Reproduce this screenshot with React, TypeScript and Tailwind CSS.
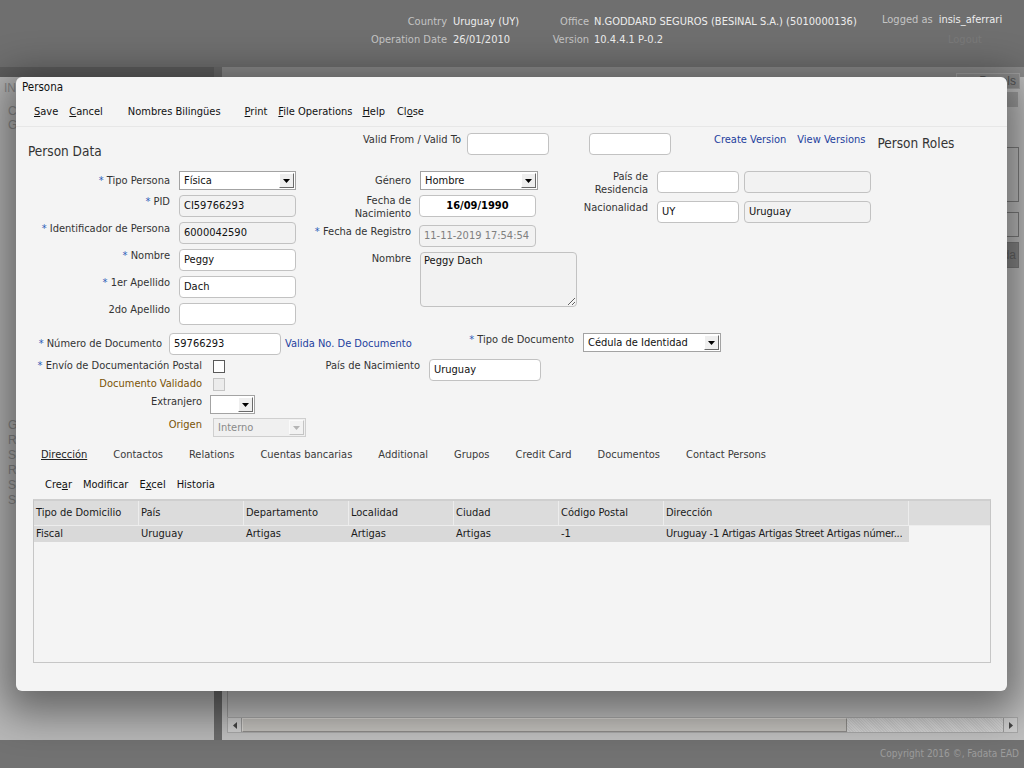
import React from "react";

const Tri = ({ color = "#000" }: { color?: string }) => (
  <svg width="7" height="4" viewBox="0 0 7 4">
    <path d="M0 0h7L3.5 4z" fill={color} />
  </svg>
);

const Req = () => <span className="text-[#2e5cb8]">*</span>;

function Select({
  value = "",
  className = "",
  disabled = false,
}: {
  value?: string;
  className?: string;
  disabled?: boolean;
}) {
  return (
    <div
      className={`flex items-center justify-between shrink-0 h-[19px] pl-[4px] pr-[1px] border ${
        disabled ? "bg-[#f0f0f0] border-[#cfcfcf] text-[#8a8a8a]" : "bg-white border-[#a3a3a3] text-[#111]"
      } ${className}`}
    >
      <span className="whitespace-nowrap">{value}</span>
      <span
        className={`w-[15px] h-[15px] flex items-center justify-center border ${
          disabled
            ? "bg-[#f2f2f2] border-t-[#fafafa] border-l-[#fafafa] border-r-[#c4c4c4] border-b-[#c4c4c4]"
            : "bg-[#efefef] border-t-white border-l-white border-r-[#6a6a6a] border-b-[#6a6a6a]"
        }`}
      >
        <Tri color={disabled ? "#b5b5b5" : "#000"} />
      </span>
    </div>
  );
}

function Input({
  value = "",
  className = "",
  ro = false,
}: {
  value?: string;
  className?: string;
  ro?: boolean;
}) {
  return (
    <div
      className={`shrink-0 h-[22px] rounded-[4px] border border-[#c2c2c2] px-[4px] flex items-center whitespace-nowrap ${
        ro ? "bg-[#f2f2f2]" : "bg-white"
      } ${className}`}
    >
      {value}
    </div>
  );
}

const Check = ({ disabled = false }: { disabled?: boolean }) => (
  <div
    className={`w-[12px] h-[13px] shrink-0 border ${
      disabled ? "bg-[#ececec] border-[#c4c4c4]" : "bg-white border-[#5a5a5a]"
    }`}
  />
);

const cols = [
  "Tipo de Domicilio",
  "País",
  "Departamento",
  "Localidad",
  "Ciudad",
  "Código Postal",
];
const row = ["Fiscal", "Uruguay", "Artigas", "Artigas", "Artigas", "-1"];

export default function App() {
  return (
    <div className="relative w-[1024px] h-[768px] overflow-hidden flex flex-col font-['DejaVu_Sans_Condensed','Liberation_Sans',sans-serif] text-[11px] leading-[14px]">
      {/* Header */}
      <header className="h-[67px] shrink-0 bg-[#6f6f6f] flex pt-[15px]">
        <div className="ml-[360px] w-[180px] grid grid-cols-[87px_auto] gap-x-[6px] gap-y-[4px] content-start">
          <span className="text-right text-[#c4c4c4]">Country</span>
          <span className="text-[#ededed] whitespace-nowrap">Uruguay (UY)</span>
          <span className="text-right text-[#c4c4c4]">Operation Date</span>
          <span className="text-[#ededed]">26/01/2010</span>
        </div>
        <div className="w-[342px] grid grid-cols-[49px_auto] gap-x-[5px] gap-y-[4px] content-start">
          <span className="text-right text-[#c4c4c4]">Office</span>
          <span className="text-[#ededed] whitespace-nowrap">N.GODDARD SEGUROS (BESINAL S.A.) (5010000136)</span>
          <span className="text-right text-[#c4c4c4]">Version</span>
          <span className="text-[#ededed]">10.4.4.1 P-0.2</span>
        </div>
        <div className="flex flex-col -mt-[2px]">
          <div className="whitespace-nowrap">
            <span className="text-[#c4c4c4]">Logged as</span>
            <span className="ml-[6px] text-[#ededed]">insis_aferrari</span>
          </div>
          <div className="mt-[6px] pl-[66px] text-[#7a7a7a]">Logout</div>
        </div>
      </header>

      {/* Background app */}
      <div className="flex-1 flex min-h-0">
        <div className="w-[214px] shrink-0 flex flex-col bg-[#b8b8b8]">
          <div className="h-[10px] bg-[#5e5e5e]" />
          <div className="flex-1 flex flex-col text-[12px] leading-[14px] text-[#8a8a8a] font-['Liberation_Sans',sans-serif]">
            <div className="pl-[4px] pt-[4px]">INFO</div>
            <div className="pl-[8px] mt-[9px]">Cliente</div>
            <div className="pl-[8px]">General</div>
            <div className="pl-[8px] mt-[286px]">General</div>
            <div className="pl-[8px] mt-[1px]">Riesgos</div>
            <div className="pl-[8px] mt-[1px]">Siniestros</div>
            <div className="pl-[8px] mt-[1px]">Reclamos</div>
            <div className="pl-[8px] mt-[1px]">Servicios</div>
            <div className="pl-[8px] mt-[1px]">Solicitudes</div>
          </div>
        </div>
        <div className="w-[8px] shrink-0 bg-[#6b6b6b]" />
        <div className="flex-1 flex flex-col bg-[#c0c0c0] relative">
          <div className="h-[10px] bg-[#8c8c8c]" />
          <div className="absolute right-[4px] top-[6px] h-[16px] w-[64px] border border-[#a2a2a2] bg-[#8f8f8f] text-[12px] leading-[14px] text-[#555] font-['Liberation_Sans',sans-serif] text-right pr-[3px]">
            Panels
          </div>
          <div className="flex-1 flex flex-col pl-[5px] pr-[6px] pb-[7px]">
            <div className="mt-[15px] h-[15px] bg-[#9e9e9e]" />
            <div className="mt-[40px] h-[55px] border border-[#7e7e7e] mr-[-1px]" />
            <div className="mt-[10px] h-[25px] border border-[#7e7e7e] mr-[-1px]" />
            <div className="mt-[5px] h-[26px] border border-[#7e7e7e] bg-[#8a8a8a] mr-[-1px] text-right pr-[2px] pt-[5px] text-[12px] text-[#666] font-['Liberation_Sans',sans-serif]">
              Moneda
            </div>
            <div className="flex-1 border-l border-[#9a9a9a]" />
            <div className="h-[16px] flex border border-[#a8a8a8] bg-[#c4c4c4]">
              <div className="w-[14px] flex items-center justify-center border-r border-[#9a9a9a] bg-[#cfcfcf]">
                <svg width="4" height="7" viewBox="0 0 4 7">
                  <path d="M4 0v7L0 3.5z" fill="#444" />
                </svg>
              </div>
              <div className="w-[605px] bg-[#c3c1bd] border border-t-[#d8d6d2] border-b-[#8f8d8a] border-l-[#d8d6d2] border-r-[#8f8d8a]" />
              <div className="flex-1 bg-[repeating-linear-gradient(45deg,#c9c9c9_0px,#c9c9c9_1px,#d3d3d3_1px,#d3d3d3_2px)]" />
              <div className="w-[14px] flex items-center justify-center border-l border-[#9a9a9a] bg-[#cfcfcf]">
                <svg width="4" height="7" viewBox="0 0 4 7">
                  <path d="M0 0v7l4-3.5z" fill="#444" />
                </svg>
              </div>
            </div>
          </div>
        </div>
      </div>

      <footer className="h-[28px] shrink-0 bg-[#727272] flex items-center justify-end pr-[5px] text-[10px] text-[#9d9d9d]">
        Copyright 2016 ©, Fadata EAD
      </footer>

      {/* Modal */}
      <div className="absolute left-[16px] top-[77px] w-[991px] h-[614px] bg-[#f4f4f4] rounded-[6px] shadow-[0_10px_40px_12px_rgba(0,0,0,0.45)] flex flex-col text-[#222]">
        <div className="h-[20px] pl-[6px] pt-[3px] text-[11.5px] text-[#111]">Persona</div>
        <div className="h-[30px] flex items-center pt-[1px] pl-[18px] border-b border-[#e7e7e7] text-[#111] whitespace-nowrap">
          <span>
            <span className="underline">S</span>ave
          </span>
          <span className="ml-[11px]">
            <span className="underline">C</span>ancel
          </span>
          <span className="ml-[25px]">Nombres Bilingües</span>
          <span className="ml-[24px]">
            <span className="underline">P</span>rint
          </span>
          <span className="ml-[11px]">
            <span className="underline">F</span>ile Operations
          </span>
          <span className="ml-[10px]">
            <span className="underline">H</span>elp
          </span>
          <span className="ml-[12px]">
            Cl<span className="underline">o</span>se
          </span>
        </div>

        <div className="pl-[12px] flex flex-col">
          {/* Header row */}
          <div className="mt-[6px] h-[22px] flex items-start">
            <div className="w-[268px] shrink-0 pt-[10px] text-[13.5px] leading-[16px] text-[#333]">Person Data</div>
            <div className="w-[165px] shrink-0 text-right text-[#333]">Valid From / Valid To</div>
            <Input className="ml-[6px] w-[82px]" />
            <Input className="ml-[40px] w-[82px]" />
            <span className="ml-[43px] text-[#1e3f9e] whitespace-nowrap">Create Version</span>
            <span className="ml-[11px] text-[#1e3f9e] whitespace-nowrap">View Versions</span>
            <span className="ml-[12px] pt-[2px] text-[13.5px] leading-[16px] text-[#333] whitespace-nowrap">Person Roles</span>
          </div>

          {/* Main fields */}
          <div className="mt-[16px] flex items-start text-[#333]">
            <div className="w-[268px] shrink-0 flex flex-col gap-[5px]">
              <div className="flex items-center h-[19px]">
                <div className="w-[142px] text-right">
                  <Req /> Tipo Persona
                </div>
                <Select value="Física" className="ml-[9px] w-[117px]" />
              </div>
              <div className="flex items-start">
                <div className="w-[142px] text-right">
                  <Req /> PID
                </div>
                <Input ro value="CI59766293" className="ml-[9px] w-[117px] text-[#111]" />
              </div>
              <div className="flex items-start">
                <div className="w-[142px] text-right whitespace-nowrap">
                  <Req /> Identificador de Persona
                </div>
                <Input ro value="6000042590" className="ml-[9px] w-[117px] text-[#111]" />
              </div>
              <div className="flex items-start">
                <div className="w-[142px] text-right">
                  <Req /> Nombre
                </div>
                <Input value="Peggy" className="ml-[9px] w-[117px] text-[#111]" />
              </div>
              <div className="flex items-start">
                <div className="w-[142px] text-right">
                  <Req /> 1er Apellido
                </div>
                <Input value="Dach" className="ml-[9px] w-[117px] text-[#111]" />
              </div>
              <div className="flex items-start">
                <div className="w-[142px] text-right">2do Apellido</div>
                <Input className="ml-[9px] w-[117px]" />
              </div>
            </div>

            <div className="w-[281px] shrink-0 flex flex-col">
              <div className="flex items-center h-[19px]">
                <div className="w-[115px] text-right">Género</div>
                <Select value="Hombre" className="ml-[9px] w-[118px]" />
              </div>
              <div className="mt-[5px] flex items-start h-[26px]">
                <div className="w-[115px] text-right leading-[13px] -mt-[1px]">
                  Fecha de
                  <br />
                  Nacimiento
                </div>
                <Input value="16/09/1990" className="ml-[8px] w-[117px] h-[21px] justify-center text-[#000] font-semibold" />
              </div>
              <div className="mt-[4px] flex items-start">
                <div className="w-[115px] text-right whitespace-nowrap">
                  <Req /> Fecha de Registro
                </div>
                <Input ro value="11-11-2019 17:54:54" className="ml-[8px] w-[117px] text-[#808080]" />
              </div>
              <div className="mt-[5px] flex items-start">
                <div className="w-[115px] text-right">Nombre</div>
                <textarea
                  readOnly
                  defaultValue="Peggy Dach"
                  className="ml-[9px] w-[157px] h-[55px] shrink-0 rounded-[4px] border border-[#c2c2c2] bg-[#f2f2f2] px-[3px] py-[1px] text-[11px] leading-[14px] text-[#111] outline-none"
                />
              </div>
            </div>

            <div className="flex flex-col">
              <div className="flex items-start h-[26px]">
                <div className="w-[71px] text-right leading-[13px] -mt-[1px]">
                  País de
                  <br />
                  Residencia
                </div>
                <Input className="ml-[9px] w-[82px]" />
                <Input ro className="ml-[5px] w-[127px]" />
              </div>
              <div className="mt-[4px] flex items-start">
                <div className="w-[71px] text-right">Nacionalidad</div>
                <Input value="UY" className="ml-[9px] w-[82px] text-[#111]" />
                <Input ro value="Uruguay" className="ml-[5px] w-[127px] text-[#111]" />
              </div>
            </div>
          </div>

          {/* Second section */}
          <div className="mt-[8px] h-[22px] flex items-center text-[#333]">
            <div className="w-[134px] shrink-0 text-right whitespace-nowrap">
              <Req /> Número de Documento
            </div>
            <Input value="59766293" className="ml-[7px] w-[112px] text-[#111]" />
            <div className="ml-[4px] w-[175px] shrink-0 text-[#1e3f9e] whitespace-nowrap">Valida No. De Documento</div>
            <div className="w-[114px] shrink-0 text-right self-start whitespace-nowrap">
              <Req /> Tipo de Documento
            </div>
            <Select value="Cédula de Identidad" className="ml-[9px] w-[138px] self-start" />
          </div>

          <div className="mt-[4px] flex items-start text-[#333]">
            <div className="w-[197px] shrink-0 flex flex-col">
              <div className="h-[18px] flex items-start">
                <div className="w-[174px] shrink-0 text-right whitespace-nowrap">
                  <Req /> Envío de Documentación Postal
                </div>
                <div className="ml-[11px] mt-[1px]">
                  <Check />
                </div>
              </div>
              <div className="h-[18px] flex items-start">
                <div className="w-[174px] shrink-0 text-right text-[#7a5306]">Documento Validado</div>
                <div className="ml-[11px] mt-[1px]">
                  <Check disabled />
                </div>
              </div>
              <div className="h-[23px] flex items-start">
                <div className="w-[174px] shrink-0 text-right">Extranjero</div>
                <Select className="ml-[8px] w-[45px]" />
              </div>
              <div className="h-[19px] flex items-start">
                <div className="w-[174px] shrink-0 text-right text-[#7a5306]">Origen</div>
                <Select disabled value="Interno" className="ml-[11px] w-[93px]" />
              </div>
            </div>
            <div className="flex items-start">
              <div className="w-[195px] shrink-0 text-right">País de Nacimiento</div>
              <Input value="Uruguay" className="ml-[9px] w-[112px] text-[#111]" />
            </div>
          </div>

          {/* Tabs */}
          <div className="mt-[8px] h-[20px] flex items-center pl-[13px] gap-[26px] text-[#3a3a3a] whitespace-nowrap">
            <span className="underline text-[#222]">Dirección</span>
            <span>Contactos</span>
            <span>Relations</span>
            <span>Cuentas bancarias</span>
            <span>Additional</span>
            <span>Grupos</span>
            <span>Credit Card</span>
            <span>Documentos</span>
            <span>Contact Persons</span>
          </div>

          {/* Toolbar 2 */}
          <div className="mt-[10px] h-[20px] flex items-center pl-[17px] gap-[11px] text-[#111] whitespace-nowrap">
            <span>
              Cre<span className="underline">a</span>r
            </span>
            <span>Modificar</span>
            <span>
              E<span className="underline">x</span>cel
            </span>
            <span>Historia</span>
          </div>

          {/* Table */}
          <div className="mt-[4px] ml-[5px] w-[958px] h-[164px] border border-[#c6c6c6] border-t-[2px] border-t-[#cfcfcf] bg-[#f4f4f4] flex flex-col text-[#1a1a1a]">
            <div className="h-[25px] flex bg-[#dcdcdc] border-b border-[#ededed]">
              {cols.map((c) => (
                <div key={c} className="w-[105px] shrink-0 pl-[2px] flex items-center border-r border-[#ececec] whitespace-nowrap">
                  {c}
                </div>
              ))}
              <div className="w-[245px] shrink-0 pl-[2px] flex items-center border-r border-[#ececec]">Dirección</div>
              <div className="flex-1" />
            </div>
            <div className="h-[16px] flex">
              <div className="w-[875px] flex bg-[#d9d9d9]">
                {row.map((c, i) => (
                  <div key={i} className="w-[105px] shrink-0 pl-[2px] flex items-center whitespace-nowrap">
                    {c}
                  </div>
                ))}
                <div className="w-[245px] shrink-0 pl-[2px] flex items-center whitespace-nowrap tracking-[-0.2px]">
                  Uruguay -1 Artigas Artigas Street Artigas númer...
                </div>
              </div>
            </div>
          </div>
        </div>
      </div>
    </div>
  );
}
